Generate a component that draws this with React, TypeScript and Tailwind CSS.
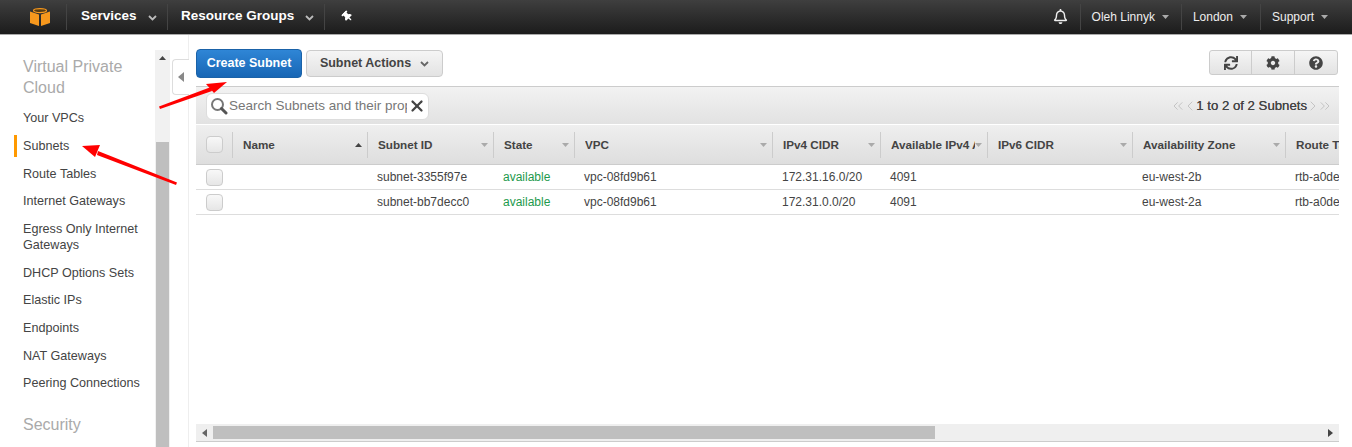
import React from "react";
import { FaSync, FaCog, FaQuestionCircle, FaThumbtack, FaRegBell } from "react-icons/fa";
import { X, ChevronsLeft, ChevronLeft, ChevronRight, ChevronsRight } from "lucide-react";

const Caret = ({ className = "" }: { className?: string }) => (
  <svg width="9" height="6" viewBox="0 0 9 6" className={className}>
    <path d="M1 1 L4.5 4.5 L8 1" fill="none" stroke="currentColor" strokeWidth="1.8" />
  </svg>
);

const Tri = ({ up = false }: { up?: boolean }) => (
  <svg width="7" height="4" viewBox="0 0 7 4" className={up ? "text-[#444]" : "text-[#aaa]"}>
    <path d={up ? "M0 4 L3.5 0 L7 4 Z" : "M0 0 L7 0 L3.5 4 Z"} fill="currentColor" />
  </svg>
);

const Sep = () => <div className="w-px h-[26px] bg-[#444]" />;

const nav = [
  { t: ["Your VPCs"], h: "h-[28px]" },
  { t: ["Subnets"], h: "h-[28px]", active: true },
  { t: ["Route Tables"], h: "h-[27px]" },
  { t: ["Internet Gateways"], h: "h-[28px]" },
  { t: ["Egress Only Internet", "Gateways"], h: "h-[44px]" },
  { t: ["DHCP Options Sets"], h: "h-[27px]" },
  { t: ["Elastic IPs"], h: "h-[28px]" },
  { t: ["Endpoints"], h: "h-[28px]" },
  { t: ["NAT Gateways"], h: "h-[27px]" },
  { t: ["Peering Connections"], h: "h-[28px]" },
];

const cols = [
  { name: "Name", w: "w-[135px]", up: true },
  { name: "Subnet ID", w: "w-[126px]" },
  { name: "State", w: "w-[81px]" },
  { name: "VPC", w: "w-[198px]" },
  { name: "IPv4 CIDR", w: "w-[108px]" },
  { name: "Available IPv4 Addresses", w: "w-[107px]" },
  { name: "IPv6 CIDR", w: "w-[145px]" },
  { name: "Availability Zone", w: "w-[153px]" },
  { name: "Route Table", w: "w-[120px]" },
];

const rows = [
  ["", "subnet-3355f97e", "available", "vpc-08fd9b61", "172.31.16.0/20", "4091", "", "eu-west-2b", "rtb-a0de1234"],
  ["", "subnet-bb7decc0", "available", "vpc-08fd9b61", "172.31.0.0/20", "4091", "", "eu-west-2a", "rtb-a0de1234"],
];

const Check = () => (
  <div className="w-[17px] h-[17px] rounded-[4px] border border-[#ccc] bg-gradient-to-b from-[#f8f8f8] to-[#e6e6e6]" />
);

export default function App() {
  return (
    <div className="relative w-[1352px] h-[447px] overflow-hidden bg-white font-['Liberation_Sans',Arial,sans-serif] flex flex-col">
      <header className="h-[35px] shrink-0 flex items-center pb-px bg-gradient-to-b from-[#3f3f3f] to-[#1c1c1c] border-b border-[#aaa] text-white">
        <div className="w-[66px] flex justify-end pr-[16px] items-center">
          <svg width="20" height="18" viewBox="0 0 20 18">
            <path d="M0 3.5 L9 6.5 L9 18 L0 15 Z" fill="#f7981d" />
            <path d="M20 3.5 L11 6.5 L11 18 L20 15 Z" fill="#f7981d" />
            <ellipse cx="10" cy="2.6" rx="6.5" ry="2" fill="#5a3d12" stroke="#f7981d" strokeWidth="1.2" />
          </svg>
        </div>
        <Sep />
        <div className="w-[100px] flex items-center pl-[14px] text-[13.5px] font-bold">
          Services
          <Caret className="ml-[11px] mt-[3px] text-[#bbb]" />
        </div>
        <Sep />
        <div className="w-[156px] flex items-center pl-[13px] text-[13.5px] font-bold">
          Resource Groups
          <Caret className="ml-[11px] mt-[3px] text-[#bbb]" />
        </div>
        <Sep />
        <div className="ml-[17px]">
          <FaThumbtack size={11} className="-rotate-45" />
        </div>
        <div className="ml-auto flex items-center text-[12px] text-[#eee]">
          <FaRegBell size={15} className="mr-[12px]" />
          <Sep />
          <div className="flex items-center pl-[11px] pr-[12px] gap-[7px]">
            Oleh Linnyk <Tri />
          </div>
          <Sep />
          <div className="flex items-center pl-[11px] pr-[13px] gap-[7px]">
            London <Tri />
          </div>
          <Sep />
          <div className="flex items-center pl-[11px] pr-[24px] gap-[7px]">
            Support <Tri />
          </div>
        </div>
      </header>

      <div className="flex flex-1 min-h-0">
        <aside className="w-[155px] shrink-0 pl-[23px] pt-[21px] overflow-hidden">
          <h2 className="text-[16px] leading-[21px] text-[#aaa] mb-[6px]">
            Virtual Private
            <br />
            Cloud
          </h2>
          <nav className="relative">
            {nav.map((n) => (
              <div key={n.t[0]} className={`relative ${n.h} flex flex-col justify-center text-[12.6px] leading-[16px] text-[#444]`}>
                {n.active && <span className="absolute -left-[9px] top-[3px] w-[3px] h-[22px] bg-[#f90]" />}
                {n.t.map((l) => (
                  <span key={l} className="whitespace-nowrap">{l}</span>
                ))}
              </div>
            ))}
          </nav>
          <h2 className="text-[16px] leading-[21px] text-[#aaa] mt-[17px]">Security</h2>
        </aside>

        <div className="w-[15px] shrink-0 mt-[15px] bg-[#f1f1f1] flex flex-col items-center">
          <div className="h-[92px] pt-[6px] w-full flex justify-center">
            <Tri up />
          </div>
          <div className="flex-1 w-[13px] bg-[#bfbfbf]" />
        </div>

        <div className="w-[19px] shrink-0 border-r border-[#eee] pt-[24px] flex justify-end">
          <div className="w-[17px] h-[36px] -mr-px bg-white border border-r-0 border-[#ddd] rounded-l-[4px] flex items-center justify-center">
            <svg width="6" height="10" viewBox="0 0 6 10"><path d="M6 0 L0 5 L6 10 Z" fill="#888" /></svg>
          </div>
        </div>

        <main className="w-[1143px] shrink-0 ml-[7px] flex flex-col overflow-hidden">
          <div className="h-[51px] shrink-0 pt-[14px] flex items-start">
            <button className="w-[106px] h-[29px] rounded-[4px] border border-[#1a62a8] bg-gradient-to-b from-[#2f86d6] to-[#1766b5] text-white text-[12.5px] font-bold">
              Create Subnet
            </button>
            <button className="ml-[4px] mt-[1px] w-[137px] h-[27px] rounded-[4px] border border-[#ccc] bg-gradient-to-b from-[#f5f5f5] to-[#e3e3e3] text-[#444] text-[12.5px] font-bold flex items-center justify-center gap-[9px]">
              Subnet Actions <Caret className="text-[#666]" />
            </button>
            <div className="ml-auto mr-[1px] mt-[1px] flex h-[25px] rounded-[3px] border border-[#ccc] bg-gradient-to-b from-[#f5f5f5] to-[#e3e3e3] text-[#444]">
              <div className="w-[42px] flex items-center justify-center border-r border-[#ccc]"><FaSync size={14} /></div>
              <div className="w-[43px] flex items-center justify-center border-r border-[#ccc]"><FaCog size={14} /></div>
              <div className="w-[42px] flex items-center justify-center"><FaQuestionCircle size={14} /></div>
            </div>
          </div>

          <div className="h-[38px] shrink-0 flex items-center pt-px border-t border-[#ccc] bg-gradient-to-b from-[#f2f2f2] to-[#e2e2e2] pl-[10px]">
            <div className="w-[223px] h-[27px] rounded-[6px] border border-[#ddd] bg-white flex items-center pl-[3px]">
              <svg width="18" height="18" viewBox="0 0 18 18" className="shrink-0">
                <circle cx="7.5" cy="7.5" r="5.5" fill="none" stroke="#777" strokeWidth="2" />
                <path d="M11.5 11.5 L16 16" stroke="#555" strokeWidth="3" strokeLinecap="round" />
              </svg>
              <span className="w-[178px] ml-[1px] overflow-hidden whitespace-nowrap text-[13.5px] text-[#777]">Search Subnets and their properties</span>
              <X size={18} strokeWidth={3} className="text-[#444] ml-[1px] shrink-0" />
            </div>
            <div className="ml-auto mr-[8px] flex items-center text-[13.2px] text-[#444]">
              <ChevronsLeft size={16} strokeWidth={1.5} className="-mx-[2px] text-[#c4c4c4]" />
              <ChevronLeft size={16} strokeWidth={1.5} className="-mx-[2px] text-[#c4c4c4]" />
              <span className="[text-shadow:0_0_0.5px_#444]">1 to 2 of 2 Subnets</span>
              <ChevronRight size={16} strokeWidth={1.5} className="-mx-[2px] text-[#c4c4c4]" />
              <ChevronsRight size={16} strokeWidth={1.5} className="-mx-[2px] text-[#c4c4c4]" />
            </div>
          </div>

          <div className="h-[41px] shrink-0 flex items-center border-t border-white border-b border-b-[#ccc] bg-gradient-to-b from-[#efefef] to-[#dedede] overflow-hidden">
            <div className="w-[36px] shrink-0 pl-[10px]"><Check /></div>
            {cols.map((c) => (
              <div key={c.name} className={`${c.w} shrink-0 relative h-[26px] border-l border-[#ccc] flex items-center pl-[10px] pr-[12px] text-[11.7px] font-bold text-[#444] overflow-hidden`}>
                <span className="whitespace-nowrap overflow-hidden flex-1">{c.name}</span>
                <span className="absolute right-[5px] top-[11px] flex"><Tri up={c.up} /></span>
              </div>
            ))}
          </div>

          {rows.map((r, i) => (
            <div key={i} className="h-[25px] shrink-0 flex items-center border-b border-[#ddd] overflow-hidden text-[12px] text-[#444]">
              <div className="w-[36px] shrink-0 pl-[10px]"><Check /></div>
              {cols.map((c, j) => (
                <div key={c.name} className={`${c.w} shrink-0 pl-[10px] whitespace-nowrap ${r[j] === "available" ? "text-[#1d9a4d]" : ""}`}>
                  {r[j]}
                </div>
              ))}
            </div>
          ))}

          <div className="flex-1" />
          <div className="h-[18px] shrink-0 mb-[5px] flex items-center bg-[#efefef] border-b border-[#ccc]">
            <div className="w-[17px] flex justify-center">
              <svg width="5" height="8" viewBox="0 0 5 8"><path d="M5 0 L0 4 L5 8 Z" fill="#666" /></svg>
            </div>
            <div className="w-[722px] h-[13px] bg-[#bfbfbf]" />
            <div className="ml-auto w-[17px] flex justify-center">
              <svg width="5" height="8" viewBox="0 0 5 8"><path d="M0 0 L5 4 L0 8 Z" fill="#444" /></svg>
            </div>
          </div>
        </main>
      </div>

      <svg className="absolute left-0 top-0 pointer-events-none" width="1352" height="447">
        <path d="M159 106.5 L160 109 L212 91 L211 87 Z" fill="#f00" />
        <path d="M227 82 L206 84 L214 93 Z" fill="#f00" />
        <path d="M177 182.5 L176 185 L97 155 L98 151 Z" fill="#f00" />
        <path d="M82 146 L100 145 L95 157 Z" fill="#f00" />
      </svg>
    </div>
  );
}
